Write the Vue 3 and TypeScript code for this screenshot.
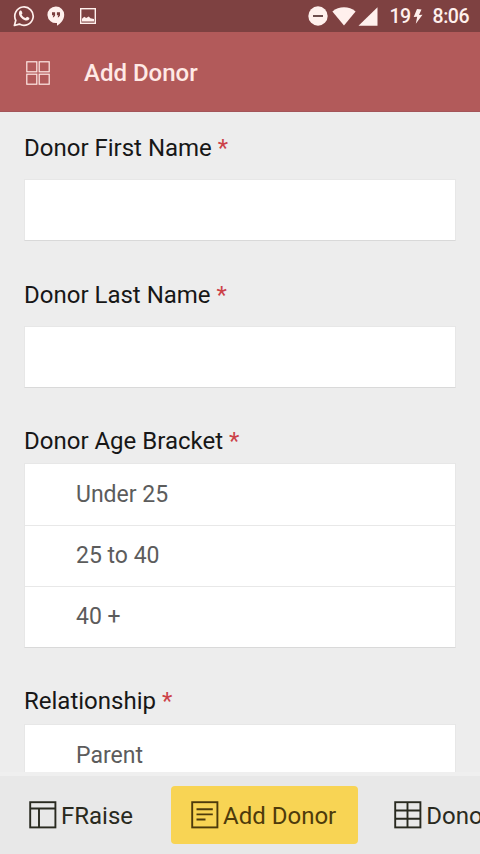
<script setup lang="ts">
interface Field {
  label: string
  options?: string[]
}

interface Tab {
  label: string
  icon: 'layout' | 'form' | 'table'
  active?: boolean
}

const fields: Field[] = [
  { label: 'Donor First Name' },
  { label: 'Donor Last Name' },
  { label: 'Donor Age Bracket', options: ['Under 25', '25 to 40', '40 +'] },
  { label: 'Relationship', options: ['Parent'] },
]

const tabs: Tab[] = [
  { label: 'FRaise', icon: 'layout' },
  { label: 'Add Donor', icon: 'form', active: true },
  { label: 'Donors', icon: 'table' },
]
</script>

<template>
  <div class="screen">
    <div class="status">
      <div class="notifications">
        <svg class="whatsapp" width="22" height="22" viewBox="0 0 22 22">
          <path d="M1.4 20.5 2.8 15.3A9.2 9.2 0 1 1 6.4 19.1Z" fill="none" stroke="currentColor" stroke-width="1.7" stroke-linejoin="round" />
          <path d="M7.3 5.6c.6-.3 1.1-.1 1.3.4l.8 1.9c.2.5-.6 1.2-.8 1.5.9 1.9 2.1 2.9 4.1 3.7.5-.5 1-1.6 1.5-1.4l2 1c.5.3.1 1.6-.5 2.1-1.2 1-2.6.9-4.4.1-2.5-1.1-4.7-3.6-5.2-5.5-.4-1.6.2-3.3 1.2-3.8Z" fill="currentColor" />
        </svg>
        <svg class="hangouts" width="18" height="21" viewBox="0 0 18 21">
          <path d="M9 .5a8.2 8.2 0 0 1 8.2 8.2c0 4.8-3.3 8.5-7.2 11.1V17A8.3 8.3 0 1 1 9 .5Z" fill="currentColor" />
          <path d="M5 6.2h3.1v3.3L6.8 11.3H5.7l.8-2H5ZM9.9 6.2H13v3.3l-1.3 1.8h-1.1l.8-2H9.9Z" fill="#7a3d3d" />
        </svg>
        <svg class="photo" width="16" height="16" viewBox="0 0 16 16">
          <rect x=".7" y=".7" width="14.6" height="14.6" fill="none" stroke="currentColor" stroke-width="1.4" />
          <path d="M2 13.6v-2.8l2.2-2 2 1.1 2.6-1.5 1.6 1.8 3.6.9v2.5Z" fill="currentColor" />
        </svg>
      </div>
      <div class="system">
        <svg width="20" height="20" viewBox="0 0 20 20">
          <circle cx="10" cy="10" r="9.7" fill="currentColor" />
          <path d="M5 10h10" stroke="#5d3c3d" stroke-width="1.8" />
        </svg>
        <svg class="wifi" width="24" height="19" viewBox="0 0 24 19">
          <path d="M.4 4.4C7-1 17-1 23.6 4.4L12 18.6Z" fill="currentColor" />
        </svg>
        <svg class="signal" width="20" height="19" viewBox="0 0 20 19">
          <path d="M19.5.3v18.4H.5Z" fill="currentColor" />
        </svg>
        <span class="battery">19</span>
        <svg class="bolt" width="10" height="15" viewBox="0 0 10 15">
          <path d="M4 0 .7 8l3.5-.2L2.8 14.7 9.5 5.8 6 6 8.5.4Z" fill="currentColor" />
        </svg>
        <span class="clock">8:06</span>
      </div>
    </div>

    <header class="toolbar">
      <svg width="24" height="24" viewBox="0 0 24 24" fill="none" stroke="currentColor" stroke-width="1.2">
        <rect x=".8" y=".8" width="10" height="10" />
        <rect x="13.2" y=".8" width="10" height="10" />
        <rect x=".8" y="13.2" width="10" height="10" />
        <rect x="13.2" y="13.2" width="10" height="10" />
      </svg>
      <h1>Add Donor</h1>
    </header>

    <main class="form">
      <section v-for="field in fields" :key="field.label" class="field" :class="{ choice: field.options }">
        <div class="label">{{ field.label }} <span class="required">*</span></div>
        <ul v-if="field.options" class="options">
          <li v-for="option in field.options" :key="option">{{ option }}</li>
        </ul>
        <input v-else type="text" :aria-label="field.label" />
      </section>
    </main>

    <nav class="tabs">
      <button v-for="tab in tabs" :key="tab.label" class="tab" :class="{ active: tab.active }">
        <svg width="28" height="28" viewBox="0 0 28 28" fill="none" stroke="currentColor" stroke-width="1.9">
          <rect x="1.2" y="1.2" width="25.2" height="25.2" />
          <path v-if="tab.icon === 'layout'" d="M1 7.5h25.5M10 7.5v19" />
          <path v-else-if="tab.icon === 'form'" d="M5.5 8.3h16.3M5.5 13.4h16.3M5.5 18.5h9" />
          <path v-else d="M13.5 1v25.5M1 9.5h25.5M1 17.7h25.5" />
        </svg>
        <span>{{ tab.label }}</span>
      </button>
    </nav>
  </div>
</template>

<style>
body {
  margin: 0;
  overflow: hidden;
}
</style>

<style scoped>
.screen {
  width: 480px;
  height: 854px;
  display: flex;
  flex-direction: column;
  overflow: hidden;
  background: #ededed;
  font-family: Roboto, sans-serif;
  font-size: 24px;
  line-height: 28px;
}

svg {
  display: block;
  flex: none;
}

.status {
  flex: none;
  box-sizing: border-box;
  height: 32px;
  display: flex;
  justify-content: space-between;
  padding: 0 11px 0 13px;
  background: #7e4141;
  color: #fff0ed;
}

.notifications,
.system {
  display: flex;
  align-items: center;
}

.hangouts {
  margin-left: 12px;
}

.photo {
  margin-left: 15px;
}

.wifi {
  margin-left: 4px;
}

.signal {
  margin-left: 2px;
}

.battery,
.clock {
  font-size: 19.5px;
  font-weight: 500;
  line-height: 33px;
  letter-spacing: -0.5px;
}

.battery {
  margin-left: 11px;
}

.bolt {
  margin-left: 2px;
}

.clock {
  margin-left: 10px;
}

.toolbar {
  flex: none;
  box-sizing: border-box;
  height: 80px;
  display: flex;
  align-items: center;
  gap: 34px;
  padding: 2px 26px 0;
  border-bottom: 1px solid #a45559;
  background: #b25a5a;
  color: #ffe9e5;
}

h1 {
  margin: 0;
  font-size: 24px;
  font-weight: 500;
  line-height: 28px;
}

.form {
  flex: 1;
  min-height: 0;
  overflow: hidden;
  display: flex;
  flex-direction: column;
  gap: 40px;
  padding: 22px 24px 0;
}

.field {
  flex: none;
  display: flex;
  flex-direction: column;
  gap: 17px;
}

.field.choice {
  gap: 8px;
  margin-top: -1px;
}

.field.choice:last-child {
  gap: 9px;
}

.label {
  color: #171717;
}

.required {
  color: #cc4148;
}

input,
.options {
  box-sizing: border-box;
  width: 432px;
  margin: 0;
  border: 1px solid #e7e7e7;
  border-bottom-color: #d9d9d9;
  background: #fff;
}

input {
  height: 62px;
  padding: 0 16px;
  outline: none;
  border-radius: 0;
  font: inherit;
}

.options {
  padding: 0;
  list-style: none;
}

li {
  box-sizing: border-box;
  height: 61px;
  padding: 17px 0 0 51px;
  color: #5c5c5c;
  font-size: 23px;
}

li + li {
  border-top: 1px solid #e8e8e8;
  padding-top: 16px;
}

.tabs {
  flex: none;
  box-sizing: border-box;
  width: 480px;
  height: 82px;
  display: flex;
  gap: 16px;
  padding: 10px 0 10px 9px;
  overflow: hidden;
  border-top: 4px solid #efefef;
  background: #e8e8e8;
}

.tab {
  flex: none;
  height: 58px;
  display: flex;
  align-items: center;
  gap: 4px;
  margin: 0;
  padding: 0 22px 0 20px;
  border: 0;
  border-radius: 4px;
  background: transparent;
  color: #292a20;
  font: inherit;
  white-space: nowrap;
}

.tab span {
  padding-top: 2px;
}

.tab.active {
  background: #f8d454;
  color: #4e3b0b;
}
</style>
